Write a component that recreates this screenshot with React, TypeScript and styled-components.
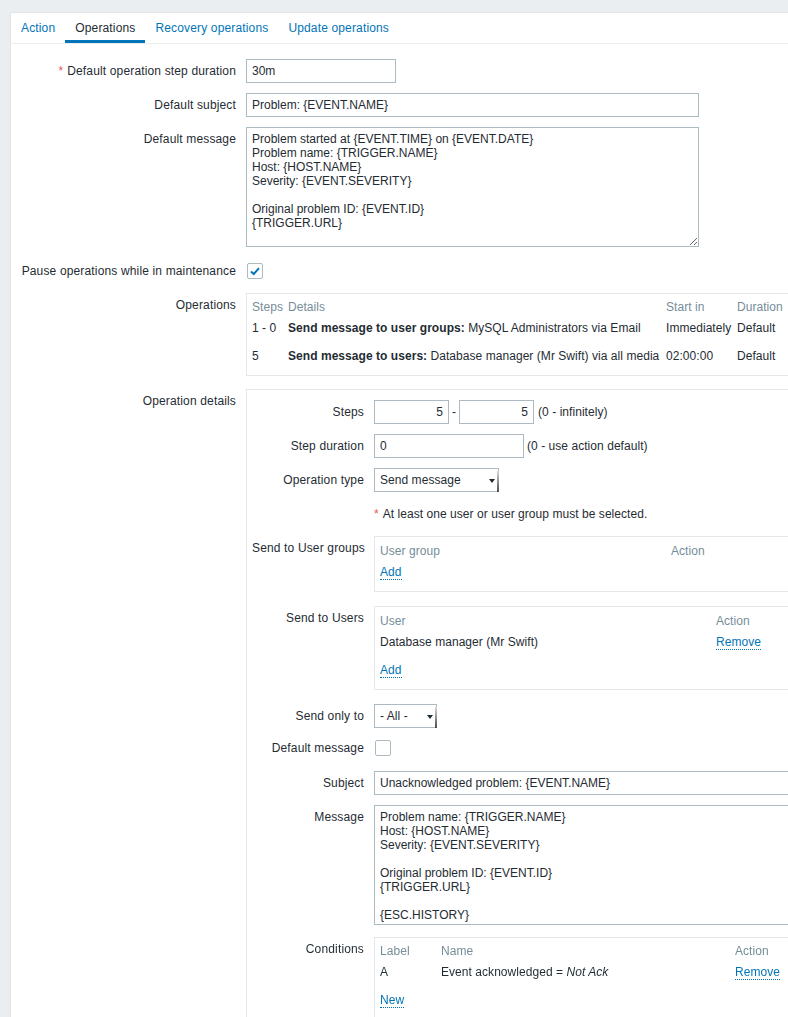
import React from "react";
import styled, { createGlobalStyle } from "styled-components";

const GlobalStyle = createGlobalStyle`
  html, body {
    margin: 0;
    padding: 0;
    overflow: hidden;
    background: #ebeef0;
  }
  body {
    font-family: "Liberation Sans", Arial, sans-serif;
    font-size: 12px;
    line-height: 14px;
    letter-spacing: 0.05px;
    color: #1f2c33;
  }
`;

const Page = styled.div`
  padding: 12px 0 0 10px;
`;

const Panel = styled.div`
  background: #fff;
  border: 1px solid #dfe4e7;
  border-right: none;
  width: 1100px;
  min-height: 1100px;
`;

const TabList = styled.div`
  display: flex;
  border-bottom: 1px solid #ebeef0;
`;

const Tab = styled.a<{ $active?: boolean }>`
  display: block;
  padding: 8px 10px 5px;
  line-height: 14px;
  letter-spacing: 0.15px;
  border-bottom: 3px solid ${(p) => (p.$active ? "#0275b8" : "transparent")};
  color: ${(p) => (p.$active ? "#1f2c33" : "#0275b8")};
  text-decoration: none;
  cursor: pointer;
`;

const Form = styled.div`
  display: flex;
  flex-direction: column;
  padding: 15px 0 40px;
`;

const Row = styled.div<{ $mt?: number; $label: number }>`
  display: grid;
  grid-template-columns: ${(p) => p.$label}px 1fr;
  column-gap: 10px;
  align-items: start;
  margin-top: ${(p) => p.$mt ?? 0}px;
`;

const Label = styled.div`
  text-align: right;
  line-height: 24px;
  letter-spacing: 0.15px;
  white-space: nowrap;
`;

const Req = styled.span`
  color: #e45959;
  margin-right: 4px;
`;

const Field = styled.div`
  display: flex;
  align-items: center;
  gap: 3px;
  min-height: 24px;
  white-space: nowrap;
`;

const TextInput = styled.input<{ $w: string; $right?: boolean }>`
  width: ${(p) => p.$w};
  height: 24px;
  box-sizing: border-box;
  margin: 0;
  border: 1px solid #acbbc2;
  padding: 0 5px;
  background: #fff;
  font-family: inherit;
  font-size: 12px;
  color: #1f2c33;
  text-align: ${(p) => (p.$right ? "right" : "left")};
  outline: none;
`;

const TextArea = styled.textarea<{ $w: string }>`
  display: block;
  width: ${(p) => p.$w};
  height: 120px;
  box-sizing: border-box;
  margin: 0;
  border: 1px solid #acbbc2;
  padding: 4px 5px;
  background: #fff;
  font-family: inherit;
  font-size: 12px;
  line-height: 14px;
  color: #1f2c33;
  outline: none;
  resize: both;
`;

const SelectBox = styled.div<{ $w: number }>`
  position: relative;
  box-sizing: border-box;
  width: ${(p) => p.$w}px;
  height: 24px;
  border: 1px solid #acbbc2;
  padding: 0 5px;
  line-height: 22px;
  background: #fff;
  white-space: nowrap;
  &::after {
    content: "";
    position: absolute;
    right: 3px;
    top: 10px;
    border-left: 3px solid transparent;
    border-right: 3px solid transparent;
    border-top: 4px solid #1f2c33;
  }
  &::before {
    content: "";
    position: absolute;
    right: -1px;
    top: 2px;
    bottom: -1px;
    width: 2px;
    background: linear-gradient(#d8d8d8, #4a4a4a);
  }
`;

const CheckWrap = styled.div`
  height: 24px;
  display: flex;
  align-items: center;
`;

const CheckBox = styled.span`
  display: inline-flex;
  align-items: center;
  justify-content: center;
  width: 16px;
  height: 16px;
  box-sizing: border-box;
  border: 1px solid #acbbc2;
  border-radius: 2px;
  background: #fff;
  margin-left: 1px;
`;

const Box = styled.div<{ $pad?: string }>`
  border: 1px solid #e4e8eb;
  padding: ${(p) => p.$pad ?? "5px"};
`;

const Grid = styled.div<{ $cols: string }>`
  display: grid;
  grid-template-columns: ${(p) => p.$cols};
`;

const Head = styled.div<{ $top?: number }>`
  color: #768d99;
  line-height: 14px;
  padding-top: ${(p) => p.$top ?? 2}px;
  white-space: nowrap;
`;

const Cell = styled.div`
  padding: 7px 0;
  line-height: 14px;
  white-space: nowrap;
`;

const Link = styled.a`
  color: #0275b8;
  text-decoration: none;
  border-bottom: 1px dotted #0275b8;
  cursor: pointer;
`;

const Hint = styled.span`
  margin-left: 1px;
`;

const Note = styled.div`
  line-height: 24px;
  white-space: nowrap;
`;

const Check = ({ checked }: { checked?: boolean }) => (
  <CheckWrap>
    <CheckBox>
      {checked && (
        <svg width="12" height="12" viewBox="0 0 12 12">
          <polyline
            points="2,6.5 4.8,9 10,3.2"
            fill="none"
            stroke="#0275b8"
            strokeWidth="2"
          />
        </svg>
      )}
    </CheckBox>
  </CheckWrap>
);

const defaultMessage = `Problem started at {EVENT.TIME} on {EVENT.DATE}
Problem name: {TRIGGER.NAME}
Host: {HOST.NAME}
Severity: {EVENT.SEVERITY}

Original problem ID: {EVENT.ID}
{TRIGGER.URL}`;

const opMessage = `Problem name: {TRIGGER.NAME}
Host: {HOST.NAME}
Severity: {EVENT.SEVERITY}

Original problem ID: {EVENT.ID}
{TRIGGER.URL}

{ESC.HISTORY}`;

const MAIN = 225;
const INNER = 112;

export default function App() {
  return (
    <>
      <GlobalStyle />
      <Page>
        <Panel>
          <TabList>
            <Tab>Action</Tab>
            <Tab $active>Operations</Tab>
            <Tab>Recovery operations</Tab>
            <Tab>Update operations</Tab>
          </TabList>
          <Form>
            <Row $label={MAIN}>
              <Label>
                <Req>*</Req>Default operation step duration
              </Label>
              <Field>
                <TextInput $w="150px" defaultValue="30m" />
              </Field>
            </Row>
            <Row $label={MAIN} $mt={10}>
              <Label>Default subject</Label>
              <Field>
                <TextInput $w="453px" defaultValue="Problem: {EVENT.NAME}" />
              </Field>
            </Row>
            <Row $label={MAIN} $mt={10}>
              <Label>Default message</Label>
              <div>
                <TextArea $w="453px" defaultValue={defaultMessage} />
              </div>
            </Row>
            <Row $label={MAIN} $mt={12}>
              <Label>Pause operations while in maintenance</Label>
              <Check checked />
            </Row>
            <Row $label={MAIN} $mt={10}>
              <Label>Operations</Label>
              <Box>
                <Grid $cols="36px 378px 71px 1fr">
                  <Head $top={1}>Steps</Head>
                  <Head $top={1}>Details</Head>
                  <Head $top={1}>Start in</Head>
                  <Head $top={1}>Duration</Head>
                  <Cell>1 - 0</Cell>
                  <Cell>
                    <b>Send message to user groups:</b> MySQL Administrators via
                    Email
                  </Cell>
                  <Cell>Immediately</Cell>
                  <Cell>Default</Cell>
                  <Cell>5</Cell>
                  <Cell>
                    <b>Send message to users:</b> Database manager (Mr Swift) via
                    all media
                  </Cell>
                  <Cell>02:00:00</Cell>
                  <Cell>Default</Cell>
                </Grid>
              </Box>
            </Row>
            <Row $label={MAIN} $mt={13}>
              <Label>Operation details</Label>
              <Box $pad="10px 0 30px 5px">
                <Row $label={INNER}>
                  <Label>Steps</Label>
                  <Field>
                    <TextInput $w="75px" $right defaultValue="5" />
                    <span>-</span>
                    <TextInput $w="75px" $right defaultValue="5" />
                    <Hint>(0 - infinitely)</Hint>
                  </Field>
                </Row>
                <Row $label={INNER} $mt={10}>
                  <Label>Step duration</Label>
                  <Field>
                    <TextInput $w="150px" defaultValue="0" />
                    <span>(0 - use action default)</span>
                  </Field>
                </Row>
                <Row $label={INNER} $mt={10}>
                  <Label>Operation type</Label>
                  <Field>
                    <SelectBox $w={125}>Send message</SelectBox>
                  </Field>
                </Row>
                <Row $label={INNER} $mt={10}>
                  <Label />
                  <Note>
                    <Req>*</Req>At least one user or user group must be selected.
                  </Note>
                </Row>
                <Row $label={INNER} $mt={10}>
                  <Label>Send to User groups</Label>
                  <Box>
                    <Grid $cols="291px 1fr">
                      <Head>User group</Head>
                      <Head>Action</Head>
                      <Cell>
                        <Link>Add</Link>
                      </Cell>
                      <Cell />
                    </Grid>
                  </Box>
                </Row>
                <Row $label={INNER} $mt={14}>
                  <Label>Send to Users</Label>
                  <Box>
                    <Grid $cols="336px 1fr">
                      <Head>User</Head>
                      <Head>Action</Head>
                      <Cell>Database manager (Mr Swift)</Cell>
                      <Cell>
                        <Link>Remove</Link>
                      </Cell>
                      <Cell>
                        <Link>Add</Link>
                      </Cell>
                      <Cell />
                    </Grid>
                  </Box>
                </Row>
                <Row $label={INNER} $mt={14}>
                  <Label>Send only to</Label>
                  <Field>
                    <SelectBox $w={63}>- All -</SelectBox>
                  </Field>
                </Row>
                <Row $label={INNER} $mt={8}>
                  <Label>Default message</Label>
                  <Check />
                </Row>
                <Row $label={INNER} $mt={11}>
                  <Label>Subject</Label>
                  <Field>
                    <TextInput
                      $w="100%"
                      defaultValue="Unacknowledged problem: {EVENT.NAME}"
                    />
                  </Field>
                </Row>
                <Row $label={INNER} $mt={10}>
                  <Label>Message</Label>
                  <div>
                    <TextArea $w="100%" defaultValue={opMessage} />
                  </div>
                </Row>
                <Row $label={INNER} $mt={12}>
                  <Label>Conditions</Label>
                  <Box>
                    <Grid $cols="61px 294px 1fr">
                      <Head $top={1}>Label</Head>
                      <Head $top={1}>Name</Head>
                      <Head $top={1}>Action</Head>
                      <Cell>A</Cell>
                      <Cell>
                        Event acknowledged = <i>Not Ack</i>
                      </Cell>
                      <Cell>
                        <Link>Remove</Link>
                      </Cell>
                      <Cell>
                        <Link>New</Link>
                      </Cell>
                      <Cell />
                      <Cell />
                    </Grid>
                  </Box>
                </Row>
              </Box>
            </Row>
          </Form>
        </Panel>
      </Page>
    </>
  );
}
